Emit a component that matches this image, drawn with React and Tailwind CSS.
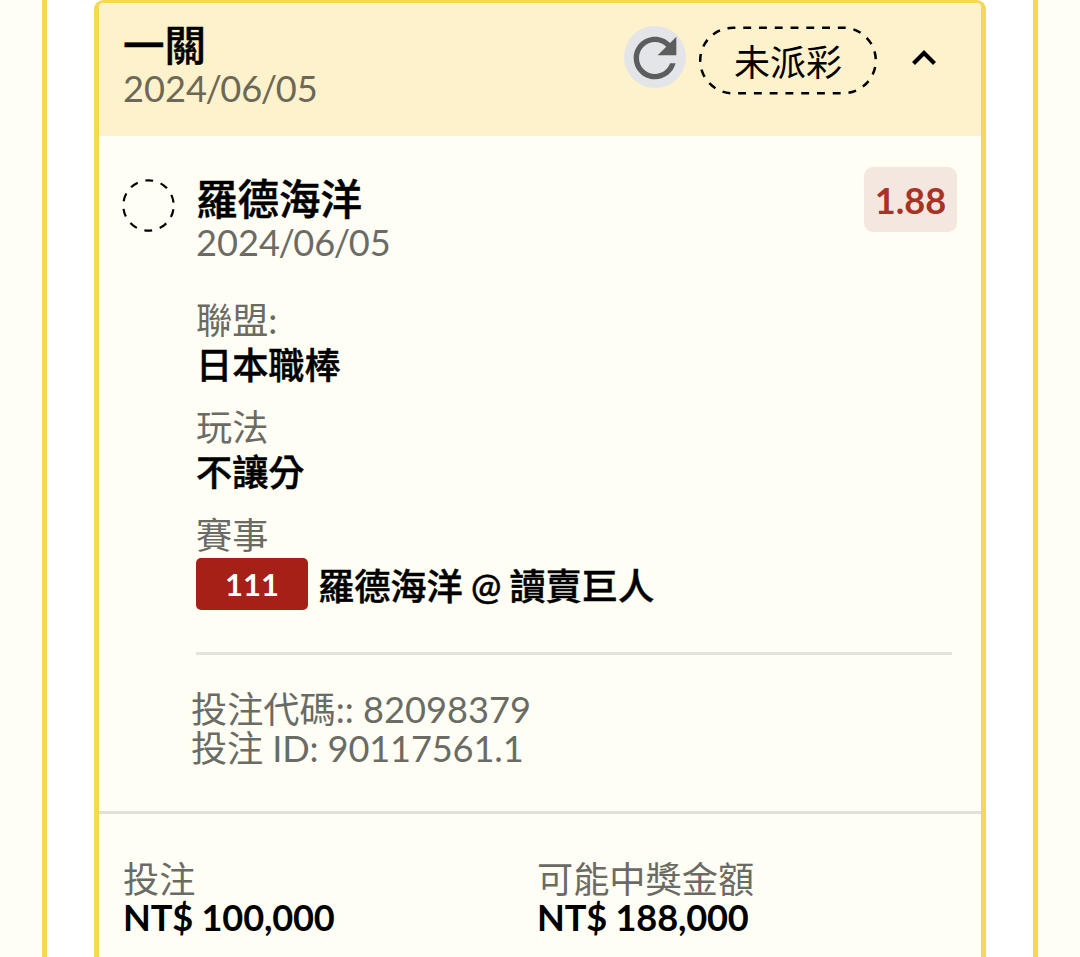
import { clsx } from 'clsx'

const DETAILS = [
  { label: '聯盟:', value: '日本職棒' },
  { label: '玩法', value: '不讓分' },
]

// Medium CJK with a hairline stroke, reads as semibold
const SEMIBOLD = 'font-medium [-webkit-text-stroke:0.5px_#000]'

function RefreshButton() {
  return (
    <button className="flex size-[62px] items-center justify-center rounded-full bg-[#e4e5e8]">
      <svg viewBox="0 0 24 24" className="mt-[2px] size-[64px] shrink-0" fill="#5c5d5f">
        <path d="M17.65 6.35C16.2 4.9 14.21 4 12 4c-4.42 0-7.99 3.58-7.99 8s3.57 8 7.99 8c3.73 0 6.84-2.55 7.73-6h-2.08c-.82 2.33-3.04 4-5.65 4-3.31 0-6-2.69-6-6s2.69-6 6-6c1.66 0 3.14.69 4.22 1.78L13 11h7V4l-2.35 2.35z" />
      </svg>
    </button>
  )
}

function PendingPill({ children }) {
  return (
    <div className="relative ml-[13px] flex h-[69px] w-[178px] items-center justify-center">
      <svg className="absolute inset-0 size-full" viewBox="0 0 178 69" fill="none">
        <rect
          x="1.2"
          y="1.7"
          width="175.6"
          height="65.6"
          rx="32.8"
          pathLength="216"
          stroke="#000"
          strokeWidth="2.5"
          strokeDasharray="4 4"
          strokeDashoffset="2.8"
        />
      </svg>
      <span className="relative pt-[2px] text-[36px] leading-[44px]">{children}</span>
    </div>
  )
}

// Slashes sit tight between the digit groups
function DateText({ value, className }) {
  const [year, month, day] = value.split('/')
  return (
    <p className={clsx('leading-[44px]', className)}>
      {year}
      <span className="mx-[-1.5px]">/</span>
      {month}
      <span className="mx-[-1.5px]">/</span>
      {day}
    </p>
  )
}

function Field({ label, value }) {
  return (
    <div className="mb-[17px]">
      <p className="text-[#6b6b66] leading-[45px]">{label}</p>
      <p className={clsx('leading-[45px]', SEMIBOLD)}>{value}</p>
    </div>
  )
}

function Amount({ label, value, className }) {
  return (
    <div className={clsx('pt-[46px]', className)}>
      <p className="text-[#6b6b66] leading-[38px]">{label}</p>
      <p className="font-bold leading-[39px] tracking-[-0.2px]">{value}</p>
    </div>
  )
}

export default function App() {
  return (
    <div
      lang="zh-Hant"
      className="h-[957px] overflow-hidden bg-[#fefef5] pl-[42px] pr-[42px] text-[36.2px] text-black
                 font-['Lato','Noto_Sans_CJK_TC',sans-serif]"
    >
      <div className="h-full border-x-[5px] border-[#f8d853] bg-white px-[47px]">
        <section className="h-[1000px] rounded-t-[9px] border-x-[5px] border-t-[3px] border-[#f5d855] bg-[#fefef5]">
          {/* Header */}
          <header className="flex h-[133px] items-start rounded-t-[4px] bg-[#fdf2cc] pl-6">
            <div className="flex-1 pt-[21px]">
              <h2 className={clsx('text-[41.5px] leading-[42px]', SEMIBOLD)}>一關</h2>
              <DateText value="2024/06/05" className="text-[#6c6756]" />
            </div>
            <div className="flex pt-[23px]">
              <RefreshButton />
              <PendingPill>未派彩</PendingPill>
              <svg className="ml-[34px] mr-[44px] mt-[23px] h-[18px] w-[26px]" viewBox="0 0 26 18" fill="none">
                <path d="M2.5 14.5 L13 4 L23.5 14.5" stroke="#000" strokeWidth="4.2" />
              </svg>
            </div>
          </header>

          {/* Selection */}
          <div className="flex h-[675px] pl-[23px] pr-6 pt-[31px]">
            <svg className="mt-3 size-[53px]" viewBox="0 0 53 53" fill="none">
              <circle cx="26.5" cy="26.5" r="25.2" stroke="#000" strokeWidth="2.2" strokeDasharray="8 7.83" strokeDashoffset="-3.9" />
            </svg>
            <div className="ml-[21px] flex-1">
              <div className="flex justify-between">
                <div className="pt-[11px]">
                  <h3 className={clsx('text-[41.5px] leading-[42px]', SEMIBOLD)}>羅德海洋</h3>
                  <DateText value="2024/06/05" className="text-[#6b6b66]" />
                </div>
                <span className="flex h-[65px] w-[93px] items-center justify-center rounded-[9px] bg-[#f4e7e0] pt-[2px] font-bold text-[#a93226]">
                  1.88
                </span>
              </div>

              <div className="mt-[34px]">
                {DETAILS.map((d) => (
                  <Field key={d.label} label={d.label} value={d.value} />
                ))}
                <p className="leading-[46px] text-[#6b6b66]">賽事</p>
              </div>
              <div className="flex items-center">
                <span className="flex h-[52px] w-[112px] items-center justify-center rounded-[5px] bg-[#a52118] text-[31px] font-bold text-white">
                  111
                </span>
                <span className={clsx('ml-[10px] pt-1 leading-[44px]', SEMIBOLD)}>
                  羅德海洋<span className="mx-[-1px]"> @ </span>讀賣巨人
                </span>
              </div>

              <hr className="mr-[5px] mt-[42px] border-t-[3px] border-[#e4e4de]" />

              <div className="-ml-[5px] mt-[35px] leading-[39px] text-[#6b6b66]">
                <p>投注代碼:: 82098379</p>
                <p className="tracking-[-0.15px]">投注 ID: 90117561.1</p>
              </div>
            </div>
          </div>

          {/* Totals */}
          <footer className="flex border-t-[3px] border-[#e1e1dc] pl-6">
            <Amount label="投注" value="NT$ 100,000" className="w-[414px]" />
            <Amount label="可能中獎金額" value="NT$ 188,000" />
          </footer>
        </section>
      </div>
    </div>
  )
}
